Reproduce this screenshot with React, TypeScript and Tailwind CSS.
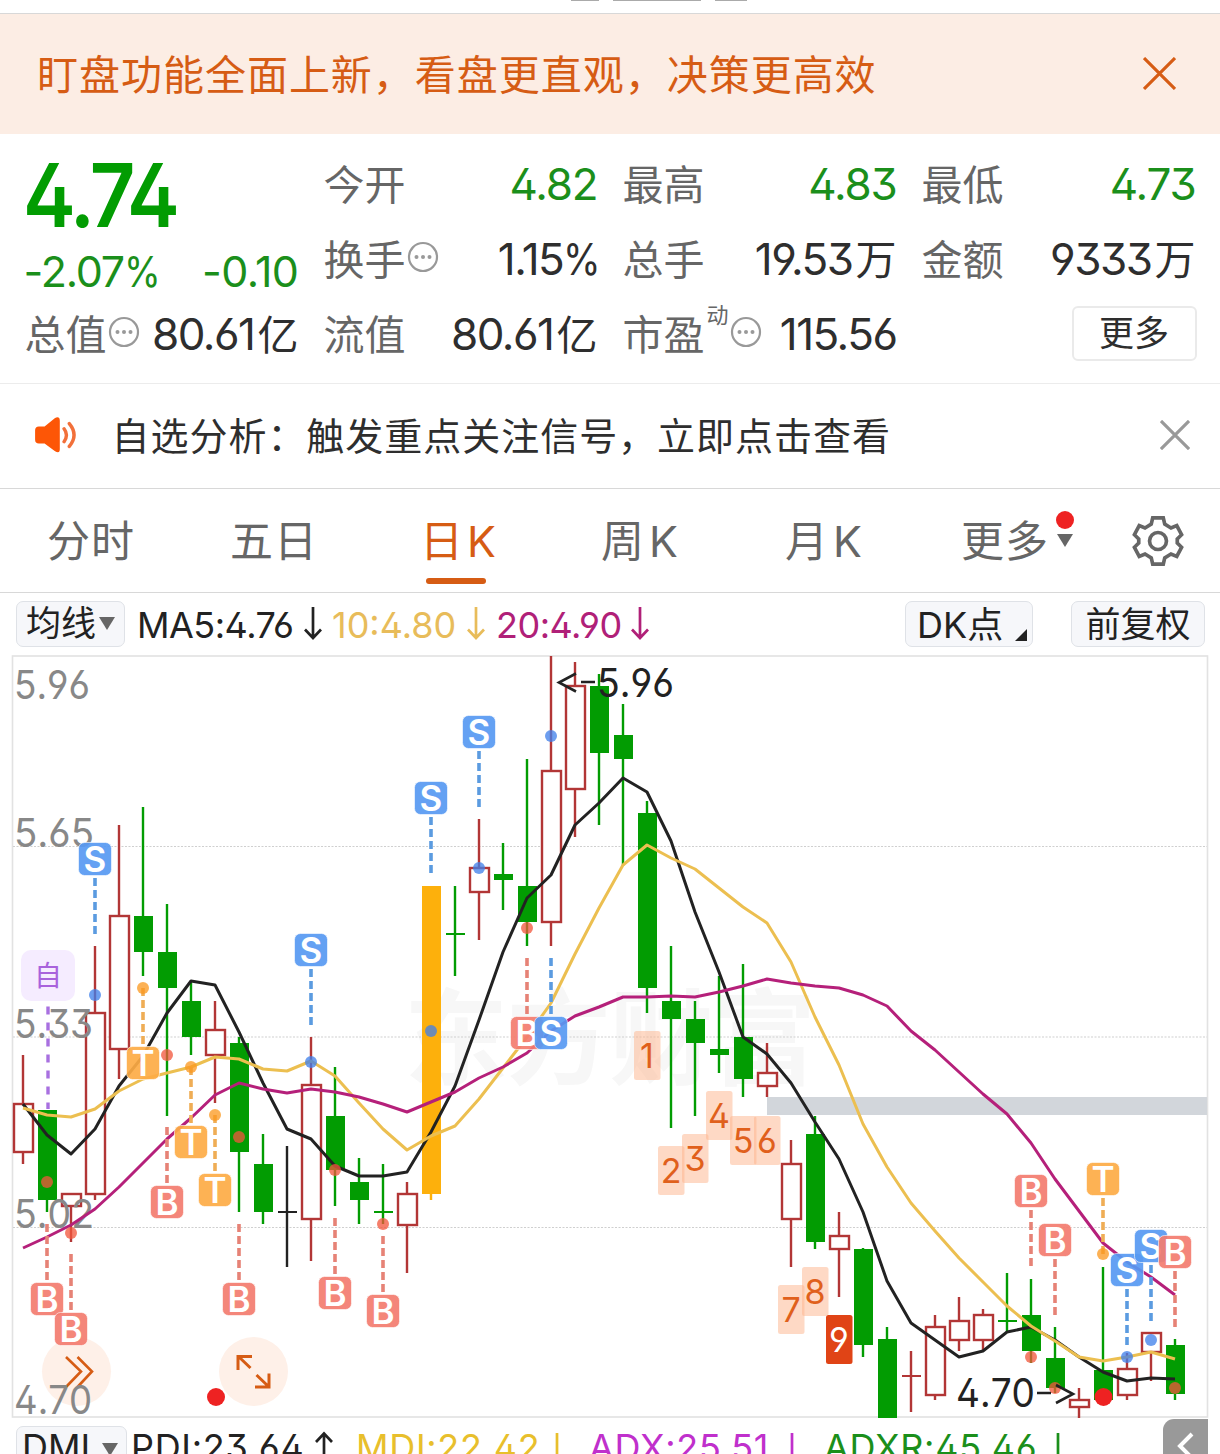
import type { ReactNode } from "react";

type Kind = "up" | "down" | "flat" | "gold";
// [kind, body top, body bottom, high, low]
type Candle = [Kind, number, number, number, number];

const candles: Candle[] = [
  ["up", 1103, 1153, 1055, 1164],
  ["down", 1110, 1200, 1110, 1212],
  ["up", 1193, 1207, 1193, 1242],
  ["up", 1012, 1195, 946, 1200],
  ["up", 915, 1050, 825, 1079],
  ["down", 916, 952, 807, 976],
  ["down", 952, 988, 904, 1116],
  ["down", 1001, 1037, 981, 1055],
  ["up", 1029, 1056, 1001, 1103],
  ["down", 1043, 1152, 1037, 1212],
  ["down", 1164, 1212, 1134, 1224],
  ["flat", 1211, 1213, 1146, 1267],
  ["up", 1084, 1220, 1037, 1261],
  ["down", 1116, 1170, 1067, 1206],
  ["down", 1182, 1200, 1158, 1224],
  ["down", 1211, 1213, 1164, 1224],
  ["up", 1193, 1226, 1182, 1273],
  ["gold", 886, 1194, 886, 1200],
  ["down", 933, 935, 886, 976],
  ["up", 867, 893, 819, 940],
  ["down", 874, 880, 843, 910],
  ["down", 886, 922, 759, 946],
  ["up", 770, 923, 656, 946],
  ["up", 685, 790, 662, 837],
  ["down", 686, 753, 674, 825],
  ["down", 735, 759, 704, 866],
  ["down", 813, 988, 801, 1013],
  ["down", 1001, 1019, 946, 1128],
  ["down", 1019, 1043, 1001, 1116],
  ["down", 1049, 1055, 976, 1073],
  ["down", 1037, 1079, 964, 1097],
  ["up", 1072, 1087, 1043, 1097],
  ["up", 1163, 1220, 1140, 1267],
  ["down", 1134, 1242, 1116, 1249],
  ["up", 1235, 1250, 1212, 1297],
  ["down", 1249, 1345, 1248, 1357],
  ["down", 1339, 1418, 1327, 1418],
  ["up", 1375, 1377, 1351, 1412],
  ["up", 1326, 1396, 1315, 1400],
  ["up", 1320, 1341, 1297, 1351],
  ["up", 1314, 1341, 1309, 1351],
  ["down", 1320, 1322, 1273, 1333],
  ["down", 1315, 1351, 1279, 1363],
  ["down", 1358, 1388, 1327, 1393],
  ["up", 1399, 1408, 1388, 1418],
  ["down", 1370, 1400, 1267, 1400],
  ["up", 1368, 1396, 1353, 1400],
  ["up", 1332, 1353, 1332, 1381],
  ["down", 1345, 1394, 1339, 1400],
];

const ma5 = [
  1104, 1135, 1154, 1129, 1086, 1056, 1013, 981, 985, 1032, 1083, 1129, 1139, 1166, 1176, 1176, 1172, 1132, 1086,
  1020, 952, 898, 875, 825, 803, 778, 792, 841, 912, 972, 1037, 1054, 1083, 1122, 1159, 1212, 1281, 1323, 1340, 1357,
  1351, 1332, 1327, 1340, 1357, 1372, 1381, 1378, 1379,
];
const ma10 = [
  1108, 1115, 1117, 1109, 1091, 1079, 1073, 1067, 1057, 1059, 1069, 1071, 1061, 1076, 1103, 1129, 1150, 1136, 1126,
  1099, 1068, 1037, 1003, 954, 908, 865, 845, 858, 869, 888, 907, 923, 962, 1017, 1065, 1124, 1167, 1203, 1231, 1258,
  1282, 1306, 1326, 1341, 1357, 1361, 1357, 1352, 1359,
];
const ma20 = [
  1248, 1237, 1225, 1209, 1187, 1163, 1139, 1118, 1095, 1083, 1089, 1093, 1089, 1092, 1097, 1104, 1112, 1102, 1092,
  1078, 1067, 1053, 1031, 1016, 1007, 997, 997, 996, 997, 992, 986, 979, 983, 986, 988, 995, 1006, 1031, 1050, 1072,
  1094, 1114, 1143, 1179, 1211, 1243, 1262, 1277, 1295,
];

const xAt = (i: number) => 23 + 24 * i;
const points = (ys: number[]) => ys.map((y, i) => `${xAt(i)},${y}`).join(" ");

const kindColor: Record<Kind, string> = { up: "#b23636", down: "#029c02", flat: "#222", gold: "#fdb00c" };
const signalColor = { S: "#5799f2", B: "#f37c6f", T: "#fdab45" };
const dashColor = { S: "#5b9be0", B: "#e68276", T: "#efad55" };
const dotColor = { S: "#3f7fea", B: "#f2573c", T: "#fb9820" };

type Letter = "S" | "B" | "T";
// [letter, x, badge centre y, dash start y, dot y]
const signals: [Letter, number, number, number, number][] = [
  ["S", 95, 859, 878, 995],
  ["T", 143, 1063, 988, 988],
  ["B", 167, 1202, 1127, 1055],
  ["T", 191, 1142, 1067, 1067],
  ["T", 215, 1190, 1115, 1115],
  ["B", 47, 1299, 1224, 1182],
  ["B", 71, 1329, 1254, 1233],
  ["B", 239, 1299, 1224, 1137],
  ["S", 311, 950, 969, 1062],
  ["B", 335, 1293, 1218, 1170],
  ["B", 383, 1311, 1236, 1224],
  ["S", 431, 798, 817, 1031],
  ["S", 479, 732, 751, 868],
  ["B", 527, 1033, 958, 928],
  ["S", 551, 1033, 958, 736],
  ["B", 1031, 1191, 1210, 1357],
  ["B", 1055, 1240, 1259, 1388],
  ["T", 1103, 1179, 1198, 1254],
  ["S", 1127, 1270, 1289, 1357],
  ["S", 1151, 1246, 1265, 1340],
  ["B", 1175, 1252, 1271, 1388],
];

const counts: [number, number, number][] = [
  [1, 647, 1031],
  [2, 671, 1146],
  [3, 695, 1134],
  [4, 719, 1091],
  [5, 743, 1116],
  [6, 767, 1116],
  [7, 791, 1285],
  [8, 815, 1267],
  [9, 839, 1315],
];

const axis: [string, number, number][] = [
  ["5.96", 699, 76],
  ["5.65", 847, 80],
  ["5.33", 1038, 79],
  ["5.02", 1228, 80],
  ["4.70", 1414, 78],
];

function Chart() {
  return (
    <svg width="1220" height="766" viewBox="0 652 1220 766" className="block shrink-0" style={{ fontKerning: "none" }}>
      <text x="404" y="1077" fontSize="104" fontWeight="700" fill="#f7f7f7" textLength="412">
        东方财富
      </text>
      <rect x="12.5" y="656" width="1195" height="761" fill="none" stroke="#e2e2e2" strokeWidth="1.6" />
      {[846.5, 1037, 1227.5].map((y) => (
        <line key={y} x1="13" x2="1207" y1={y} y2={y} stroke="#cfcfcf" strokeWidth="1" strokeDasharray="2 1.5" />
      ))}
      <rect x="767" y="1097" width="440" height="18" fill="#d2d6db" />

      <circle cx="76.5" cy="1371.5" r="34.5" fill="#fef0e8" />
      <circle cx="253.5" cy="1371.5" r="34.5" fill="#fef0e8" />
      <path d="M66 1357L81 1371.5L66 1387M77.5 1357L92 1371.5L77.5 1387" fill="none" stroke="#d65c14" strokeWidth="2.6" />
      <path
        d="M238 1370V1356.5H252M238.5 1356.5L250.5 1368M255 1387H269V1373.5M268.5 1386.5L256.5 1375"
        fill="none"
        stroke="#d65c14"
        strokeWidth="3"
      />
      <circle cx="216" cy="1397" r="9" fill="#ee2222" />

      {candles.map(([kind, top, bottom, high, low], i) => {
        const x = xAt(i);
        const color = kindColor[kind];
        const hollow = kind === "up" && bottom - top > 3;
        return (
          <g key={i}>
            {high < top && <line x1={x} x2={x} y1={high} y2={top} stroke={color} strokeWidth="2.4" />}
            {low > bottom && <line x1={x} x2={x} y1={bottom} y2={low} stroke={color} strokeWidth="2.4" />}
            {hollow ? (
              <rect x={x - 9} y={top + 1} width="19" height={bottom - top - 2} fill="#fff" stroke={color} strokeWidth="2.4" />
            ) : (
              <rect x={x - 9} y={top} width="19" height={bottom - top} fill={color} />
            )}
          </g>
        );
      })}
      {axis.map(([label, y, w]) => (
        <text key={label} x="14" y={y} fontSize="40" fill="#888" textLength={w} lengthAdjust="spacingAndGlyphs">
          {label}
        </text>
      ))}
      <g fill="none" strokeWidth="3" strokeLinejoin="round">
        <polyline points={points(ma5)} stroke="#222" />
        <polyline points={points(ma10)} stroke="#ecbf50" />
        <polyline points={points(ma20)} stroke="#b5207a" />
      </g>

      <line x1="48" x2="48" y1="1006.5" y2="1109" stroke="#a870e0" strokeWidth="3.4" strokeDasharray="8 8" />
      <rect x="21" y="950" width="54" height="51" rx="10" fill="#f5ecff" />
      <text x="48" y="985.5" fontSize="28" fill="#a862dc" textAnchor="middle">
        自
      </text>

      {signals.map(([letter, x, y, dash, dot]) => (
        <g key={`${x}-${y}`}>
          <line x1={x} x2={x} y1={dash} y2={dash + 56} stroke={dashColor[letter]} strokeWidth="3.6" strokeDasharray="8 4" />
          <circle cx={x} cy={dot} r="6" fill={dotColor[letter]} fillOpacity="0.76" />
          <rect
            x={x - 16.5}
            y={y - 16.5}
            width="33"
            height="33"
            rx="6"
            fill={signalColor[letter]}
            fillOpacity="0.92"
            stroke="#fff"
            strokeOpacity="0.6"
            strokeWidth="1"
          />
          <text x={x} y={y + 12.5} fontSize="35" fontWeight="600" fill="#fff" textAnchor="middle">
            {letter}
          </text>
        </g>
      ))}

      {counts.map(([n, x, y]) => (
        <g key={n}>
          <rect x={x - 13} y={y} width="26.5" height="49" rx="2.5" fill={n === 9 ? "#e04416" : "#fdb48c"} fillOpacity={n === 9 ? 1 : 0.5} />
          <text x={x} y={y + 37} fontSize="34" fill={n === 9 ? "#fff" : "#e0601c"} textAnchor="middle">
            {n}
          </text>
        </g>
      ))}

      <g fill="none" stroke="#222" strokeWidth="2.6">
        <path d="M576 673.5L559 682.5L576 691.5M581 682H595" />
        <path d="M1056 1385L1073 1394L1056 1403M1037 1393H1051" />
      </g>
      <text x="597" y="697" fontSize="39" fill="#222" textLength="77" lengthAdjust="spacingAndGlyphs">
        5.96
      </text>
      <text x="956" y="1407" fontSize="39" fill="#222" textLength="79" lengthAdjust="spacingAndGlyphs">
        4.70
      </text>
      <circle cx="1103.5" cy="1397" r="9" fill="#ee2222" />
    </svg>
  );
}

function Dots() {
  return (
    <svg width="32" height="32" viewBox="0 0 32 32" className="shrink-0">
      <circle cx="16" cy="16" r="14" fill="none" stroke="#999" strokeWidth="2.2" />
      <g fill="#999">
        <circle cx="9.5" cy="16" r="2" />
        <circle cx="16" cy="16" r="2" />
        <circle cx="22.5" cy="16" r="2" />
      </g>
    </svg>
  );
}

function Stat({ label, icon, sup, children, green }: { label: string; icon?: boolean; sup?: string; children: ReactNode; green?: boolean }) {
  return (
    <div className="flex h-[75px] items-center justify-between">
      <div className="flex items-center text-[41px] text-[#666]">
        {label}
        {sup && <span className="-mt-[41px] ml-[2px] text-[22px]">{sup}</span>}
        {icon && (
          <span className="-mt-[8px] ml-[1px]">
            <Dots />
          </span>
        )}
      </div>
      <div className={green ? "-mt-[3px] text-[44px] tracking-[-1.2px] text-[#1b8f1b]" : "-mt-[3px] text-[44px] tracking-[-1.5px] text-[#2e2e2e]"}>
        {children}
      </div>
    </div>
  );
}

function Unit({ children }: { children: ReactNode }) {
  return <span className="ml-[3px] text-[41px] tracking-normal">{children}</span>;
}

function Percent() {
  return <span className="-mr-[6px] inline-block origin-left scale-x-[0.87] tracking-normal">%</span>;
}

function Cross({ size, color, width }: { size: number; color: string; width: number }) {
  return (
    <svg width={size} height={size} viewBox="0 0 32 32" className="-mt-[2px] shrink-0">
      <path d="M1 1L31 31M31 1L1 31" stroke={color} strokeWidth={width} />
    </svg>
  );
}

function Arrow({ color, up }: { color: string; up?: boolean }) {
  return (
    <svg width="20" height="34" viewBox="0 0 20 34" className="shrink-0">
      <path
        d={up ? "M10 34V2M2 11L10 2.5L18 11" : "M10 0V31M2 22.5L10 31L18 22.5"}
        fill="none"
        stroke={color}
        strokeWidth="2.7"
      />
    </svg>
  );
}

function Caret({ className }: { className: string }) {
  return (
    <svg width="16" height="13" viewBox="0 0 16 13" className={className}>
      <path d="M0 0H16L8 13Z" fill="#666" />
    </svg>
  );
}

export default function App() {
  return (
    <div
      className="flex h-[1454px] w-[1220px] flex-col overflow-hidden whitespace-nowrap bg-white font-['Inter','Noto_Sans_CJK_SC',sans-serif] leading-none text-[#2e2e2e]"
      lang="zh-CN"
      style={{ fontFeatureSettings: '"ss01"' }}
    >
      <div className="flex h-[14px] shrink-0 items-start border-b border-[#d8d8d8] pl-[571px]">
        <div className="h-px w-[28px] bg-[#aaa]" />
        <div className="ml-[14px] h-px w-[88px] bg-[#aaa]" />
        <div className="ml-[14px] h-px w-[32px] bg-[#aaa]" />
      </div>

      <div className="flex h-[120px] shrink-0 items-center justify-between bg-[#fcede4] pl-[37px] pr-[44px] text-[#d65c14]">
        <span className="mt-[3px] text-[41px] tracking-[0.98px]">盯盘功能全面上新，看盘更直观，决策更高效</span>
        <Cross size={33} color="#d65c14" width={3} />
      </div>

      <div className="flex h-[249px] shrink-0 gap-[25px] pl-[24.5px] pt-[14px]">
        <div className="w-[274px]">
          <div className="flex h-[94px] items-center text-[88px] font-semibold text-[#029c02]">
            <span className="-ml-[2px] origin-left scale-x-[0.9] tracking-[-3.8px]">4.74</span>
          </div>
          <div className="flex h-[56px] items-center justify-between pt-[2px] text-[43px] text-[#1b8f1b]">
            <span className="-ml-[1px] tracking-[-1.2px]">
              -2.07
              <Percent />
            </span>
            <span className="tracking-[-0.5px]">-0.10</span>
          </div>
          <Stat label="总值" icon>
            80.61<Unit>亿</Unit>
          </Stat>
        </div>
        <div className="w-[274px]">
          <Stat label="今开" green>
            4.82
          </Stat>
          <Stat label="换手" icon>
            <span className="-mr-[3px]">
              1.15
              <Percent />
            </span>
          </Stat>
          <Stat label="流值">
            80.61<Unit>亿</Unit>
          </Stat>
        </div>
        <div className="w-[274px]">
          <Stat label="最高" green>
            4.83
          </Stat>
          <Stat label="总手">
            19.53<Unit>万</Unit>
          </Stat>
          <Stat label="市盈" sup="动" icon>
            115.56
          </Stat>
        </div>
        <div className="w-[274px]">
          <Stat label="最低" green>
            4.73
          </Stat>
          <Stat label="金额">
            9333<Unit>万</Unit>
          </Stat>
          <div className="-mr-[1px] flex h-[70px] items-center justify-end">
            <div className="flex h-[55px] w-[125px] items-center justify-center rounded-[6px] border-2 border-[#eaeaea] text-[35px]">更多</div>
          </div>
        </div>
      </div>

      <div className="flex h-[105px] shrink-0 items-center border-t border-[#ececec] pl-[33px] pr-[30px]">
        <svg width="46" height="38" viewBox="0 0 46 40" className="-mt-[2px] shrink-0">
          <path d="M5 11H11L22 2Q27 0 27 5V35Q27 40 22 37L11 29H5Q1 29 1 25V15Q1 11 5 11Z" fill="#fd5606" />
          <path d="M31.5 13.5Q36.5 20 31.5 27M37 8Q47 20 37 32" fill="none" stroke="#f2703a" strokeWidth="3.6" strokeLinecap="round" />
        </svg>
        <span className="-mt-[1px] ml-[32.5px] flex-1 text-[38px] tracking-[0.97px]">自选分析：触发重点关注信号，立即点击查看</span>
        <Cross size={30} color="#999" width={3.4} />
      </div>

      <div className="flex h-[105px] shrink-0 items-center border-y border-[#d8d8d8] pt-[2px] text-[43px] text-[#666]">
        <span className="ml-[47px] w-[183px] tracking-[1px]">分时</span>
        <span className="w-[190px] tracking-[1px]">五日</span>
        <div className="relative flex h-full w-[181px] items-center gap-[4px] text-[#d65c14]">
          日<span>K</span>
          <div className="absolute bottom-[8px] left-[6px] h-[6px] w-[60px] rounded-full bg-[#d65c14]" />
        </div>
        <div className="flex w-[184px] gap-[5px]">
          周<span>K</span>
        </div>
        <div className="flex w-[176px] gap-[5px]">
          月<span>K</span>
        </div>
        <div className="relative w-[171px] tracking-[1px]">
          更多
          <div className="absolute -top-[9px] left-[95px] size-[18px] rounded-full bg-[#ee2222]" />
          <Caret className="absolute left-[96px] top-[14px]" />
        </div>
        <svg width="52" height="52" viewBox="0 0 54 54" className="-mt-[2px] shrink-0" fill="none" stroke="#666" strokeWidth="3.8">
          <path d="M21.5 3H32.5L34 9.5L40.5 13.5L46.5 11L51.5 20.5L47 25V29L51.5 33.5L46.5 43L40.5 40.5L34 44.5L32.5 51H21.5L20 44.5L13.5 40.5L7.5 43L2.5 33.5L7 29V25L2.5 20.5L7.5 11L13.5 13.5L20 9.5Z" />
          <circle cx="27" cy="27" r="8.8" />
        </svg>
      </div>

      <div className="flex h-[59px] shrink-0 items-center pl-[16px] pt-[2px] text-[36px] text-[#222]">
        <div className="flex h-[46px] w-[109px] items-center justify-center gap-[3px] rounded-[7px] border border-[#dfe2e7] bg-[#f6f7fa] text-[35px]">
          均线
          <Caret className="" />
        </div>
        <span className="ml-[12px] w-[166px] pt-[2px] tracking-[-0.5px]">MA5:4.76</span>
        <Arrow color="#222" />
        <span className="ml-[9px] w-[134px] pt-[2px] text-[#e8bc5a]">10:4.80</span>
        <Arrow color="#e8bc5a" />
        <span className="ml-[10px] w-[134px] pt-[2px] tracking-[-0.5px] text-[#b02078]">20:4.90</span>
        <Arrow color="#b02078" />
        <div className="relative ml-[255px] flex h-[46px] w-[128px] items-center rounded-[7px] border border-[#dfe2e7] bg-[#f6f7fa] pl-[11px] pt-[2px] text-[36px]">
          DK点
          <svg width="12" height="12" viewBox="0 0 12 12" className="absolute bottom-[5px] right-[5px]">
            <path d="M12 0V12H0Z" fill="#222" />
          </svg>
        </div>
        <div className="ml-[38px] flex h-[46px] w-[134px] items-center justify-center rounded-[7px] border border-[#dfe2e7] bg-[#f6f7fa] pt-[2px] text-[35px]">
          前复权
        </div>
      </div>

      <Chart />

      <div className="flex h-[62px] shrink-0 items-start pl-[16px] text-[36px] tracking-[0.7px]">
        <div className="mt-[8px] flex h-[46px] w-[111px] items-center justify-between rounded-[7px] border border-[#dfe2e7] bg-[#f6f7fa] pb-[4px] pl-[5px] pr-[8px] tracking-normal text-[#222]">
          DMI
          <Caret className="mt-[5px]" />
        </div>
        <span className="ml-[4px] mt-[11px] w-[183px] text-[#222]">PDI:23.64</span>
        <span className="mt-[13px]">
          <Arrow color="#222" up />
        </span>
        <span className="ml-[22px] mt-[11px] w-[191px] text-[#e8bf2c]">MDI:22.42</span>
        <span className="mt-[15px]">
          <Arrow color="#e8bf2c" />
        </span>
        <span className="ml-[22px] mt-[11px] w-[193px] text-[#c030cc]">ADX:25.51</span>
        <span className="mt-[15px]">
          <Arrow color="#c030cc" />
        </span>
        <span className="ml-[22px] mt-[11px] w-[224px] text-[#1b8f1b]">ADXR:45.46</span>
        <span className="mt-[15px]">
          <Arrow color="#1b8f1b" />
        </span>
        <div className="ml-auto mr-[12px] mt-[1px] flex h-[54px] w-[45px] items-center justify-center rounded-tl-[11px] bg-[#999]">
          <svg width="18" height="28" viewBox="0 0 18 28">
            <path d="M15 2L3 14L15 26" fill="none" stroke="#fff" strokeWidth="4" />
          </svg>
        </div>
      </div>
    </div>
  );
}
